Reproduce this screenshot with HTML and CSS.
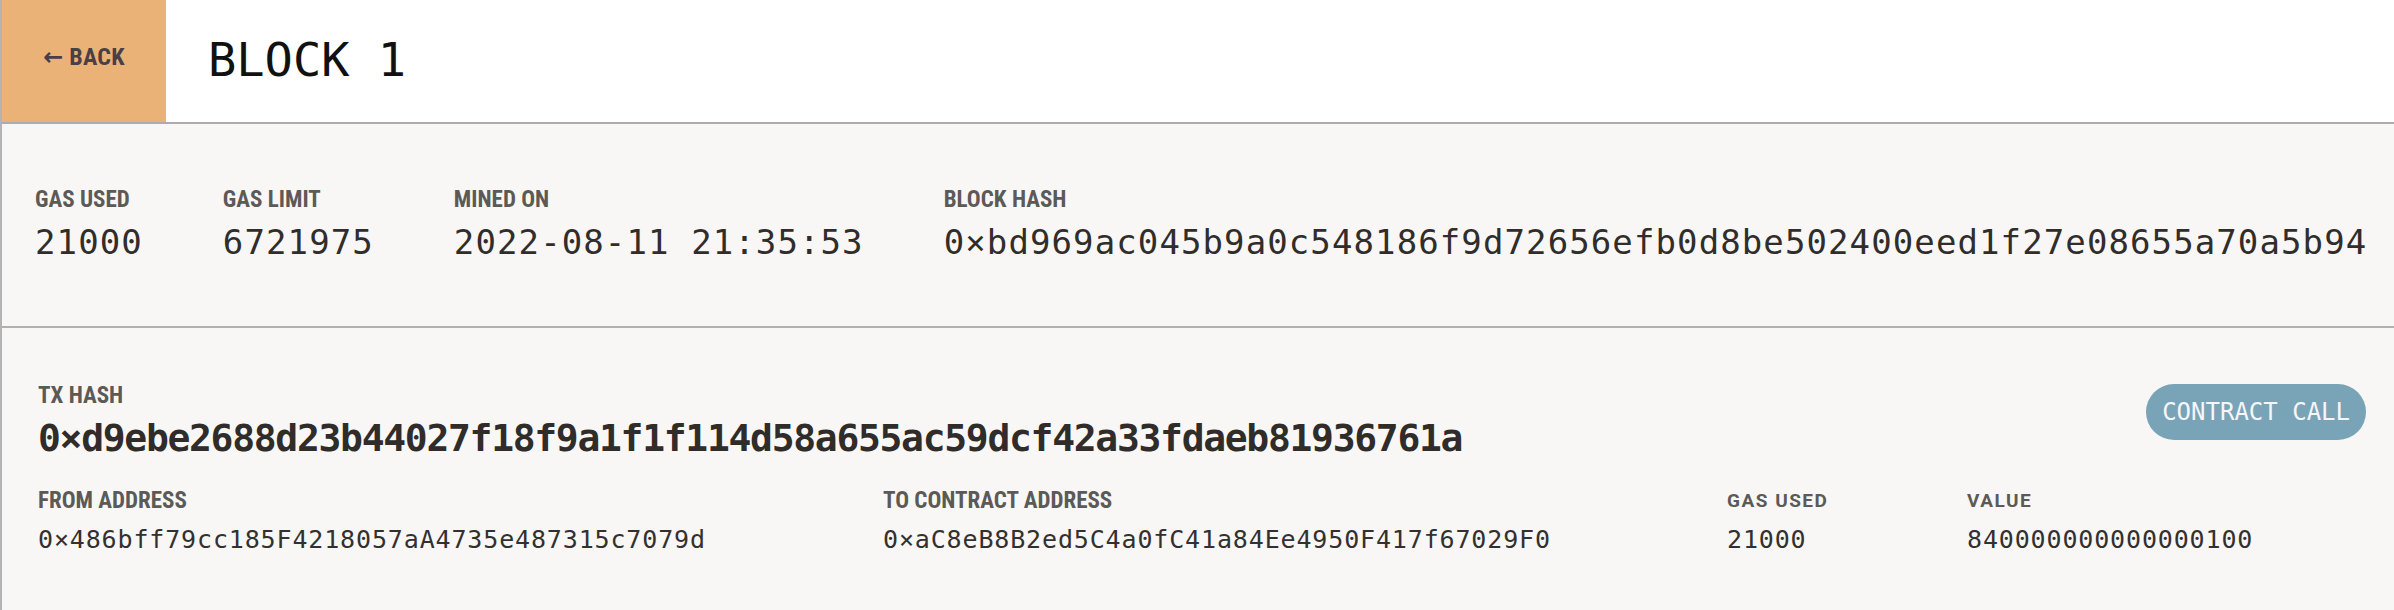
FILE: index.html
```html
<!DOCTYPE html>
<html lang="en">
<head>
<meta charset="utf-8">
<title>Block 1</title>
<link rel="stylesheet" href="styles.css">
</head>
<body>
<div class="app">
  <header class="topbar">
    <button class="back"><span class="arrow">←</span> BACK</button>
    <h1 class="title">BLOCK 1</h1>
  </header>

  <section class="block-info">
    <div class="field">
      <div class="label">GAS USED</div>
      <div class="value">21000</div>
    </div>
    <div class="field">
      <div class="label">GAS LIMIT</div>
      <div class="value">6721975</div>
    </div>
    <div class="field">
      <div class="label">MINED ON</div>
      <div class="value">2022-08-11 21:35:53</div>
    </div>
    <div class="field">
      <div class="label">BLOCK HASH</div>
      <div class="value">0×bd969ac045b9a0c548186f9d72656efb0d8be502400eed1f27e08655a70a5b94</div>
    </div>
  </section>

  <section class="tx">
    <div class="tx-head">
      <div class="tx-hash">
        <div class="label">TX HASH</div>
        <div class="hash">0×d9ebe2688d23b44027f18f9a1f1f114d58a655ac59dcf42a33fdaeb81936761a</div>
      </div>
      <div class="pill">CONTRACT CALL</div>
    </div>
    <div class="tx-grid">
      <div class="field">
        <div class="label">FROM ADDRESS</div>
        <div class="addr">0×486bff79cc185F4218057aA4735e487315c7079d</div>
      </div>
      <div class="field">
        <div class="label">TO CONTRACT ADDRESS</div>
        <div class="addr">0×aC8eB8B2ed5C4a0fC41a84Ee4950F417f67029F0</div>
      </div>
      <div class="field">
        <div class="label label-spaced">GAS USED</div>
        <div class="addr">21000</div>
      </div>
      <div class="field">
        <div class="label label-spaced">VALUE</div>
        <div class="addr">840000000000000100</div>
      </div>
    </div>
  </section>
</div>
</body>
</html>
```

FILE: styles.css
```css
* { box-sizing: border-box; }

html, body {
  margin: 0;
  padding: 0;
  background: #f8f7f5;
}

.app {
  border-left: 2px solid #b3b3b3;
  min-height: 610px;
  background: #f8f7f5;
}

.topbar {
  display: flex;
  align-items: center;
  height: 124px;
  background: #ffffff;
  border-bottom: 2px solid #acacac;
}

.back {
  align-self: stretch;
  width: 164px;
  border: 0;
  margin: 0;
  padding: 0 0 8px 0;
  background: #ebb277;
  color: #4a3f47;
  font-family: "Liberation Sans Narrow", "Roboto Condensed", "Liberation Sans", sans-serif;
  font-weight: bold;
  font-size: 24px;
  letter-spacing: 0.2px;
  cursor: pointer;
}

.arrow {
  font-family: "DejaVu Sans", sans-serif;
  font-weight: bold;
  font-size: 24px;
}

.title {
  margin: 0 0 0 42px;
  padding-bottom: 4px;
  font-family: "DejaVu Sans Mono", "Liberation Mono", monospace;
  font-weight: normal;
  font-size: 47px;
  color: #111111;
}

.label {
  font-family: "Liberation Sans Narrow", "Roboto Condensed", "Liberation Sans", sans-serif;
  font-weight: bold;
  font-size: 23px;
  line-height: 24px;
  color: #5c5a57;
  white-space: nowrap;
}

.label-spaced {
  font-family: "Roboto", "Liberation Sans", sans-serif;
  font-size: 19px;
  letter-spacing: 1.5px;
}

.block-info {
  display: flex;
  gap: 80px;
  padding: 64px 28px 64px 33px;
  border-bottom: 2px solid #b0b0b0;
}

.value {
  margin-top: 10px;
  font-family: "DejaVu Sans Mono", "Liberation Mono", monospace;
  font-size: 34px;
  letter-spacing: 1.1px;
  line-height: 40px;
  color: #302d2b;
  white-space: nowrap;
}

.tx {
  padding: 56px 28px 40px 36px;
}

.tx-head {
  display: flex;
  justify-content: space-between;
  align-items: flex-start;
}

.hash {
  margin-top: 8px;
  font-family: "DejaVu Sans Mono", "Liberation Mono", monospace;
  font-weight: bold;
  font-size: 38px;
  letter-spacing: -1.3px;
  line-height: 44px;
  color: #2f2c2a;
  white-space: nowrap;
}

.pill {
  height: 56px;
  padding: 0 16px;
  border-radius: 28px;
  background: #79a3b7;
  color: #f4f6f7;
  font-family: "DejaVu Sans Mono", "Liberation Mono", monospace;
  font-size: 24px;
  line-height: 56px;
  white-space: nowrap;
}

.tx-grid {
  display: grid;
  grid-template-columns: 845px 844px 240px 1fr;
  margin-top: 29px;
}

.addr {
  margin-top: 12px;
  font-family: "DejaVu Sans Mono", "Liberation Mono", monospace;
  font-size: 25px;
  letter-spacing: 0.85px;
  line-height: 30px;
  color: #333130;
  white-space: nowrap;
}
```
